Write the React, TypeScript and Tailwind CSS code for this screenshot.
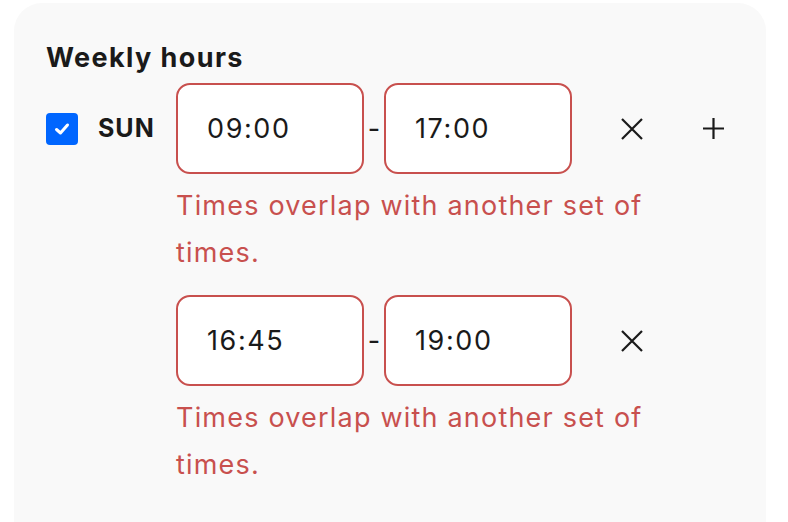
import React from "react";

function XIcon() {
  return (
    <svg width="22" height="22" viewBox="0 0 22 22" className="shrink-0">
      <path d="M1 1 L21 21 M21 1 L1 21" stroke="#1a1a1a" strokeWidth="2.2" strokeLinecap="butt" fill="none" />
    </svg>
  );
}

function PlusIcon() {
  return (
    <svg width="21" height="21" viewBox="0 0 21 21" className="shrink-0">
      <path d="M10.5 0 V21 M0 10.5 H21" stroke="#1a1a1a" strokeWidth="2.2" fill="none" />
    </svg>
  );
}

function TimeInput({ value }: { value: string }) {
  return (
    <div className="flex h-[91px] w-[188px] items-center rounded-[14px] border-2 border-[#c8504e] bg-white pl-[29px] text-[27px] tracking-[1.6px] text-[#1a1a1a]">
      {value}
    </div>
  );
}

function Slot({ from, to, plus, first }: { from: string; to: string; plus?: boolean; first?: boolean }) {
  return (
    <div className={first ? "" : "mt-[19px]"}>
      <div className="flex items-center">
        <TimeInput value={from} />
        <div className="flex w-[20px] justify-center text-[27px] text-[#1a1a1a]">-</div>
        <TimeInput value={to} />
        <div className="ml-[49px]">
          <XIcon />
        </div>
        {plus && (
          <div className="ml-[60px]">
            <PlusIcon />
          </div>
        )}
      </div>
      <p className="mt-[8px] w-[520px] text-[27px] leading-[47px] tracking-[1.2px] text-[#c8504e]">
        Times overlap with another set of times.
      </p>
    </div>
  );
}

export default function App() {
  return (
    <div className="h-[522px] overflow-hidden bg-white pl-[14px] pt-[3px] font-['Inter',sans-serif] text-[#1a1a1a]">
      <div className="h-[519px] w-[752px] rounded-t-[28px] bg-[#f9f9f9] pl-[32px] pt-[39px]">
        <h2 className="text-[27px] font-bold leading-[1.2] tracking-[1.4px]">Weekly hours</h2>
        <div className="mt-[9px] flex items-start">
          <div className="flex h-[91px] w-[130px] shrink-0 items-center">
            <div className="flex h-[32px] w-[32px] items-center justify-center rounded-[4px] bg-[#0066ff]">
              <svg width="18" height="18" viewBox="0 0 18 18">
                <path d="M3.5 9.5 L7.5 13 L14.5 5" stroke="white" strokeWidth="3" fill="none" strokeLinecap="round" strokeLinejoin="round" />
              </svg>
            </div>
            <span className="ml-[20px] text-[25px] font-bold tracking-[1px]">SUN</span>
          </div>
          <div className="flex flex-col">
            <Slot from="09:00" to="17:00" plus first />
            <Slot from="16:45" to="19:00" />
          </div>
        </div>
      </div>
    </div>
  );
}
